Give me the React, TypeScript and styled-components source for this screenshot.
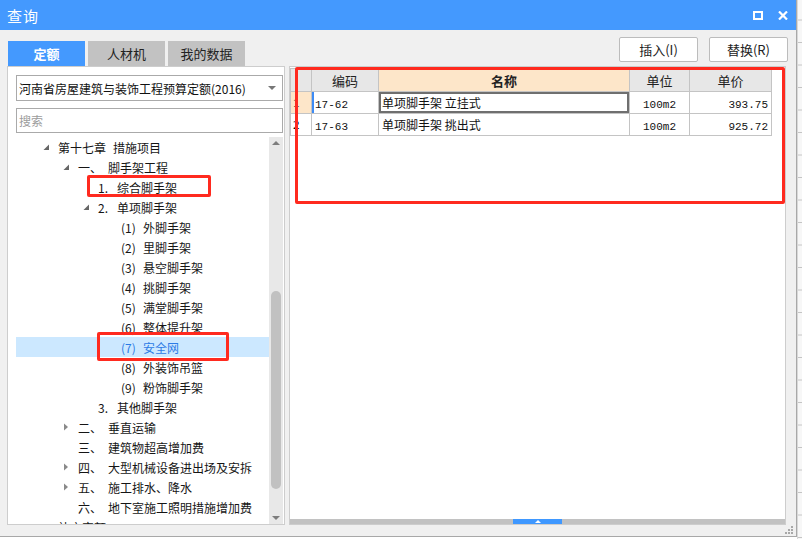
import React from 'react';
import styled, { createGlobalStyle } from 'styled-components';

const GlobalStyle = createGlobalStyle`
  html, body {
    margin: 0;
    padding: 0;
    background: #fff;
  }
  body {
    font-family: "Noto Sans CJK SC", "Liberation Sans", sans-serif;
    font-size: 12px;
    color: #1a1a1a;
  }
  * {
    box-sizing: border-box;
  }
`;

const Screen = styled.div`
  display: flex;
  width: 802px;
  height: 539px;
  overflow: hidden;
  background: #fff;
`;

const Dialog = styled.div`
  width: 797px;
  height: 537px;
  flex-shrink: 0;
  display: flex;
  flex-direction: column;
  background: #f0f0f0;
  border-right: 1px solid #a8a8a8;
  border-bottom: 1px solid #a8a8a8;
`;

// bit of the window that sits behind the dialog
const BackWindow = styled.div`
  flex: 1;
  height: 539px;
  background-color: #f7f7f7;
  background-image: repeating-linear-gradient(
    to bottom,
    transparent 0,
    transparent 21.5px,
    #c4c4c4 21.5px,
    #c4c4c4 22.5px
  );
  background-position: 0 43px;
  background-size: 100% 22.5px;
  border-left: 1px solid #d8d8d8;
`;

const TitleBar = styled.div`
  height: 30px;
  flex-shrink: 0;
  display: flex;
  align-items: center;
  padding: 0 8px 0 7px;
  background: #4499fe;
  color: #fff;
  font-size: 15px;
`;

const TitleText = styled.span`
  flex: 1;
  letter-spacing: 1px;
`;

const TitleIcons = styled.div`
  display: flex;
  align-items: center;
  gap: 15px;
`;

const Toolbar = styled.div`
  height: 36px;
  flex-shrink: 0;
  display: flex;
  align-items: flex-end;
  padding: 0 8px 0 8px;
`;

const Tabs = styled.div`
  display: flex;
  gap: 3px;
`;

const Tab = styled.div<{ $active?: boolean }>`
  width: 77px;
  height: 25px;
  display: flex;
  align-items: center;
  justify-content: center;
  font-size: 13px;
  background: ${(p) => (p.$active ? '#4499fe' : '#c2c2c2')};
  color: ${(p) => (p.$active ? '#fff' : '#222')};
  font-weight: ${(p) => (p.$active ? 700 : 400)};
`;

const Actions = styled.div`
  margin-left: auto;
  align-self: flex-start;
  margin-top: 7px;
  display: flex;
  gap: 11px;
`;

const ActionButton = styled.div`
  width: 79px;
  height: 25px;
  display: flex;
  align-items: center;
  justify-content: center;
  background: #fff;
  border: 1px solid #bcbcbc;
  border-radius: 2px;
  font-size: 13px;
  color: #222;
`;

const Main = styled.div`
  height: 459px;
  flex-shrink: 0;
  display: flex;
  gap: 4px;
  padding-left: 7px;
`;

const LeftPanel = styled.div`
  width: 278px;
  display: flex;
  flex-direction: column;
  background: #fff;
  border: 1px solid #cdcdcd;
  padding: 8px 1px 0 8px;
`;

const Select = styled.div`
  height: 26px;
  flex-shrink: 0;
  display: flex;
  align-items: center;
  padding: 0 6px 0 2px;
  border: 1px solid #aaaaaa;
  font-size: 12px;
  color: #111;
  white-space: nowrap;
`;

const SelectText = styled.span`
  flex: 1;
`;

const Search = styled.div`
  height: 25px;
  flex-shrink: 0;
  margin-top: 7px;
  display: flex;
  align-items: center;
  padding-left: 2px;
  border: 1px solid #aaaaaa;
  font-size: 12px;
  color: #9c9c9c;
`;

const Tree = styled.div`
  flex: 1;
  min-height: 0;
  margin-top: 4px;
  display: flex;
`;

const TreeList = styled.div`
  flex: 1;
  overflow: hidden;
`;

const TreeRow = styled.div<{ $level: number; $selected?: boolean }>`
  position: relative;
  height: 20px;
  display: flex;
  align-items: center;
  white-space: nowrap;
  padding-left: ${(p) => 27 + p.$level * 20 + (p.$level === 3 ? 3 : 0)}px;
  background: ${(p) => (p.$selected ? '#cce8ff' : 'transparent')};
  color: ${(p) => (p.$selected ? '#2c7be5' : '#151515')};
  font-size: 12px;
`;

const Toggle = styled.span`
  width: 15px;
  flex-shrink: 0;
  display: flex;
  align-items: center;
`;

const Prefix = styled.span<{ $w: number }>`
  width: ${(p) => p.$w}px;
  flex-shrink: 0;
`;

const RedMark = styled.span<{ $x: number; $y: number; $w: number; $h: number }>`
  position: absolute;
  left: ${(p) => p.$x}px;
  top: ${(p) => p.$y}px;
  width: ${(p) => p.$w}px;
  height: ${(p) => p.$h}px;
  border: 3px solid #ff2a1f;
  border-radius: 2px;
  pointer-events: none;
`;

const ScrollBar = styled.div`
  width: 14px;
  flex-shrink: 0;
  display: flex;
  flex-direction: column;
  align-items: center;
  background: #e8e8e8;
  padding: 4px 0 4px 0;
`;

const ScrollThumb = styled.div`
  width: 10px;
  height: 198px;
  margin-top: 146px;
  border-radius: 5px;
  background: #c1c1c1;
`;

const ScrollSpacer = styled.div`
  flex: 1;
`;

const RightPanel = styled.div`
  position: relative;
  width: 497px;
  display: flex;
  flex-direction: column;
  background: #fff;
  border: 1px solid #cdcdcd;
`;

const Grid = styled.table`
  margin-top: 1px;
  width: 481px;
  border-collapse: collapse;
  table-layout: fixed;
  font-size: 12px;
`;

const HeadCell = styled.th<{ $accent?: boolean }>`
  height: 23px;
  padding: 0;
  border: 1px solid #c4c4c4;
  font-size: 13px;
  font-weight: ${(p) => (p.$accent ? 700 : 400)};
  background: ${(p) => (p.$accent ? '#fde6c9' : '#e7e7e7')};
  color: #222;
  text-align: center;
`;

const RowNum = styled.td<{ $current?: boolean }>`
  padding: 0 0 0 2px;
  border: 1px solid #c4c4c4;
  font-family: "Liberation Serif", serif;
  font-size: 13px;
  color: #111;
  font-weight: ${(p) => (p.$current ? 700 : 400)};
  background: ${(p) => (p.$current ? '#fde6c9' : '#fff')};
`;

const Cell = styled.td<{ $align?: 'left' | 'center' | 'right'; $focus?: boolean; $marker?: boolean }>`
  height: 22px;
  padding: 0 3px;
  border: 1px solid #c4c4c4;
  text-align: ${(p) => p.$align || 'left'};
  white-space: nowrap;
  color: #111;
  box-shadow: ${(p) =>
    p.$focus ? 'inset 0 0 0 2px #6f6f6f' : p.$marker ? 'inset 2px 0 0 #3d8bf5' : 'none'};
`;

const Mono = styled.span`
  font-family: "Liberation Mono", "Noto Sans CJK SC", monospace;
  font-size: 11px;
`;

const PanelSpacer = styled.div`
  flex: 1;
`;

const HScroll = styled.div`
  height: 5px;
  flex-shrink: 0;
  display: flex;
  justify-content: center;
  background: #c2c2c2;
`;

const HScrollGrip = styled.div`
  width: 49px;
  display: flex;
  align-items: center;
  justify-content: center;
  background: #3f98ff;
`;

const BottomBar = styled.div`
  flex: 1;
  display: flex;
  justify-content: flex-end;
  align-items: flex-end;
  padding: 0 3px 2px 0;
`;

type Node = {
  level: number;
  toggle?: 'open' | 'closed';
  prefix?: string;
  text: string;
  selected?: boolean;
  mark?: { x: number; y: number; w: number; h: number };
};

const prefixWidth = [55, 30, 19, 22];

const nodes: Node[] = [
  { level: 0, toggle: 'open', prefix: '第十七章', text: '措施项目' },
  { level: 1, toggle: 'open', prefix: '一、', text: '脚手架工程' },
  { level: 2, prefix: '1.', text: '综合脚手架', mark: { x: 71, y: -2, w: 124, h: 22 } },
  { level: 2, toggle: 'open', prefix: '2.', text: '单项脚手架' },
  { level: 3, prefix: '(1)', text: '外脚手架' },
  { level: 3, prefix: '(2)', text: '里脚手架' },
  { level: 3, prefix: '(3)', text: '悬空脚手架' },
  { level: 3, prefix: '(4)', text: '挑脚手架' },
  { level: 3, prefix: '(5)', text: '满堂脚手架' },
  { level: 3, prefix: '(6)', text: '整体提升架' },
  { level: 3, prefix: '(7)', text: '安全网', selected: true, mark: { x: 81, y: -5, w: 132, h: 29 } },
  { level: 3, prefix: '(8)', text: '外装饰吊篮' },
  { level: 3, prefix: '(9)', text: '粉饰脚手架' },
  { level: 2, prefix: '3.', text: '其他脚手架' },
  { level: 1, toggle: 'closed', prefix: '二、', text: '垂直运输' },
  { level: 1, prefix: '三、', text: '建筑物超高增加费' },
  { level: 1, toggle: 'closed', prefix: '四、', text: '大型机械设备进出场及安拆' },
  { level: 1, toggle: 'closed', prefix: '五、', text: '施工排水、降水' },
  { level: 1, prefix: '六、', text: '地下室施工照明措施增加费' },
  { level: 0, text: '补充定额' },
];

const rows = [
  { no: '1', code: '17-62', name: '单项脚手架 立挂式', unit: '100m2', price: '393.75', current: true },
  { no: '2', code: '17-63', name: '单项脚手架 挑出式', unit: '100m2', price: '925.72' },
];

const ToggleIcon = ({ kind }: { kind?: 'open' | 'closed' }) => {
  if (kind === 'open') {
    return (
      <svg width="7" height="7" viewBox="0 0 7 7">
        <polygon points="6,0.5 6,6 0.5,6" fill="#666" />
      </svg>
    );
  }
  if (kind === 'closed') {
    return (
      <svg width="6" height="8" viewBox="0 0 6 8">
        <polygon points="1,0.5 5,4 1,7.5" fill="#8a8a8a" />
      </svg>
    );
  }
  return null;
};

const Arrow = ({ dir, color }: { dir: 'up' | 'down'; color: string }) => (
  <svg width="8" height="4" viewBox="0 0 8 4">
    {dir === 'up' ? (
      <polygon points="0,4 4,0 8,4" fill={color} />
    ) : (
      <polygon points="0,0 8,0 4,4" fill={color} />
    )}
  </svg>
);

export default function App() {
  return (
    <>
      <GlobalStyle />
      <Screen>
        <Dialog>
          <TitleBar>
            <TitleText>查询</TitleText>
            <TitleIcons>
              <svg width="10" height="9" viewBox="0 0 10 9">
                <rect x="1" y="1" width="8" height="7" fill="none" stroke="#fff" strokeWidth="2" />
              </svg>
              <svg width="10" height="9" viewBox="0 0 10 9">
                <path d="M1 0.5 L9 8.5 M9 0.5 L1 8.5" stroke="#fff" strokeWidth="2.2" />
              </svg>
            </TitleIcons>
          </TitleBar>

          <Toolbar>
            <Tabs>
              <Tab $active>定额</Tab>
              <Tab>人材机</Tab>
              <Tab>我的数据</Tab>
            </Tabs>
            <Actions>
              <ActionButton>插入(I)</ActionButton>
              <ActionButton>替换(R)</ActionButton>
            </Actions>
          </Toolbar>

          <Main>
            <LeftPanel>
              <Select>
                <SelectText>河南省房屋建筑与装饰工程预算定额(2016)</SelectText>
                <Arrow dir="down" color="#777" />
              </Select>
              <Search>搜索</Search>
              <Tree>
                <TreeList>
                  {nodes.map((n, i) => (
                    <TreeRow key={i} $level={n.level} $selected={n.selected}>
                      <Toggle>
                        <ToggleIcon kind={n.toggle} />
                      </Toggle>
                      {n.prefix && <Prefix $w={prefixWidth[n.level]}>{n.prefix}</Prefix>}
                      <span>{n.text}</span>
                      {n.mark && <RedMark $x={n.mark.x} $y={n.mark.y} $w={n.mark.w} $h={n.mark.h} />}
                    </TreeRow>
                  ))}
                </TreeList>
                <ScrollBar>
                  <Arrow dir="up" color="#7d7d7d" />
                  <ScrollThumb />
                  <ScrollSpacer />
                  <Arrow dir="down" color="#7d7d7d" />
                </ScrollBar>
              </Tree>
            </LeftPanel>

            <RightPanel>
              <Grid>
                <colgroup>
                  <col style={{ width: 21 }} />
                  <col style={{ width: 67 }} />
                  <col style={{ width: 251 }} />
                  <col style={{ width: 60 }} />
                  <col style={{ width: 82 }} />
                </colgroup>
                <thead>
                  <tr>
                    <HeadCell />
                    <HeadCell>编码</HeadCell>
                    <HeadCell $accent>名称</HeadCell>
                    <HeadCell>单位</HeadCell>
                    <HeadCell>单价</HeadCell>
                  </tr>
                </thead>
                <tbody>
                  {rows.map((r) => (
                    <tr key={r.no}>
                      <RowNum $current={r.current}>{r.no}</RowNum>
                      <Cell $marker={r.current}>
                        <Mono>{r.code}</Mono>
                      </Cell>
                      <Cell $focus={r.current}>{r.name}</Cell>
                      <Cell $align="center">
                        <Mono>{r.unit}</Mono>
                      </Cell>
                      <Cell $align="right">
                        <Mono>{r.price}</Mono>
                      </Cell>
                    </tr>
                  ))}
                </tbody>
              </Grid>
              <RedMark $x={5} $y={0} $w={490} $h={137} />
              <PanelSpacer />
              <HScroll>
                <HScrollGrip>
                  <svg width="6" height="3" viewBox="0 0 6 3">
                    <polygon points="0,3 3,0 6,3" fill="#fff" />
                  </svg>
                </HScrollGrip>
              </HScroll>
            </RightPanel>
          </Main>

          <BottomBar>
            <svg width="8" height="8" viewBox="0 0 8 8">
              <rect x="6" y="0" width="2" height="2" fill="#a8a8a8" />
              <rect x="3" y="3" width="2" height="2" fill="#a8a8a8" />
              <rect x="6" y="3" width="2" height="2" fill="#a8a8a8" />
              <rect x="0" y="6" width="2" height="2" fill="#a8a8a8" />
              <rect x="3" y="6" width="2" height="2" fill="#a8a8a8" />
              <rect x="6" y="6" width="2" height="2" fill="#a8a8a8" />
            </svg>
          </BottomBar>
        </Dialog>
        <BackWindow />
      </Screen>
    </>
  );
}
